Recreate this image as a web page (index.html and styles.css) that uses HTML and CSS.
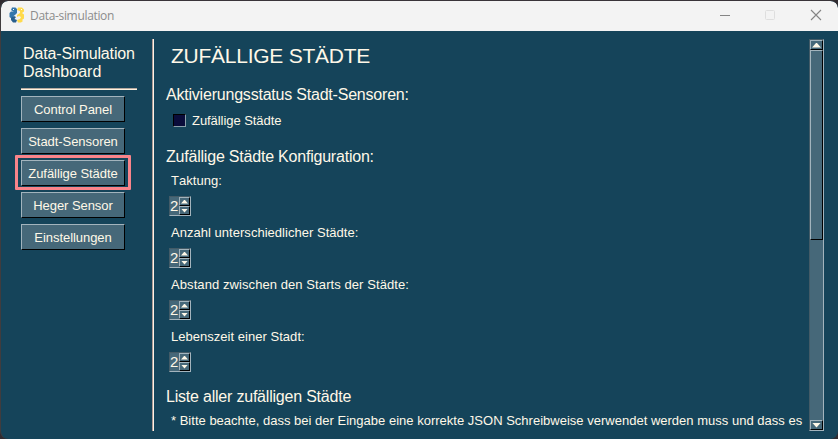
FILE: index.html
```html
<!DOCTYPE html>
<html lang="de">
<head>
<meta charset="utf-8">
<title>Data-simulation</title>
<link rel="stylesheet" href="styles.css">
</head>
<body>
<div class="window">
  <header class="titlebar">
    <svg class="logo" width="16" height="16" viewBox="0 0 16 16">
      <path d="M3 .5h3.500L8 2v4L6 8 4.500 9v2L3 12 .5 10V6L2 4.500h3L3.500 4 2 3z" fill="#3476ac"/>
      <path d="M2 11l3-2 2 1-1.500 2L8 13l-1 2.500H4L2 13z" fill="#285f8e"/>
      <path d="M9 .5h4l2 2v2L13 6l2 1.500v4L13 13l1 1-2 1.500H9L8 13l3-1 1-2-2-1-2 1V8l3-2V4L8 3z" fill="#ffda4b"/>
      <path d="M4 2h1v1H4zM12 2h1v1h-1z" fill="#fff"/>
    </svg>
    <span class="caption">Data-simulation</span>
    <svg class="controls" width="106" height="12" viewBox="0 0 106 12" fill="none">
      <path d="M1 6.500h10" stroke="#858585"/>
      <rect x="46.500" y="1.500" width="9" height="9" rx="1" stroke="#dedede"/>
      <path d="M92 1l10 10M102 1L92 11" stroke="#858585" stroke-width="1.100"/>
    </svg>
  </header>
  <div class="body">
    <nav class="sidebar">
      <div class="brand"><span class="brand-one">Data-Simulation</span><br>Dashboard</div>
      <div class="rule"></div>
      <button class="nav">Control Panel</button>
      <button class="nav">Stadt-Sensoren</button>
      <button class="nav selected">Zufällige Städte</button>
      <button class="nav">Heger Sensor</button>
      <button class="nav">Einstellungen</button>
    </nav>
    <div class="divider"></div>
    <main class="content">
      <h1>ZUFÄLLIGE STÄDTE</h1>
      <h2 class="status">Aktivierungsstatus Stadt-Sensoren:</h2>
      <div class="check"><span class="box"></span><span class="check-label">Zufällige Städte</span></div>
      <h2 class="config">Zufällige Städte Konfiguration:</h2>
      <div class="field"><div class="label">Taktung:</div><div class="spin"><span class="value">2</span><span class="steps"><i class="up"></i><i class="down"></i></span></div></div>
      <div class="field"><div class="label">Anzahl unterschiedlicher Städte:</div><div class="spin"><span class="value">2</span><span class="steps"><i class="up"></i><i class="down"></i></span></div></div>
      <div class="field"><div class="label wide">Abstand zwischen den Starts der Städte:</div><div class="spin"><span class="value">2</span><span class="steps"><i class="up"></i><i class="down"></i></span></div></div>
      <div class="field"><div class="label">Lebenszeit einer Stadt:</div><div class="spin"><span class="value">2</span><span class="steps"><i class="up"></i><i class="down"></i></span></div></div>
      <h2 class="list">Liste aller zufälligen Städte</h2>
      <p class="note">* Bitte beachte, dass bei der Eingabe eine korrekte JSON Schreibweise verwendet werden muss und dass es</p>
    </main>
    <div class="scrollbar">
      <div class="arrow"><i class="up big"></i></div>
      <div class="thumb"></div>
      <div class="arrow last"><i class="down big"></i></div>
    </div>
  </div>
</div>
</body>
</html>
```
FILE: styles.css
```css
* { box-sizing: border-box; }
body { margin: 0; background: #302b30; font: 13px/16px "Liberation Sans", Arial, sans-serif; color: #fff8e8; font-kerning: none; }
.window { width: 838px; height: 439px; border-top: 1px solid #393439; border-left: 1px solid #403c3e; border-radius: 8px; overflow: hidden; background: #15445a; }
.titlebar { height: 30px; background: #f3f3f3; display: flex; align-items: center; padding: 0 13px 0 8px; border-radius: 7px 7px 0 0; }
.logo { flex: none; margin-top: -2px; }
.caption { margin-left: 5px; flex: 1; font: 12px/16px "Open Sans", "Noto Sans", sans-serif; letter-spacing: -.33px; color: #8c8c8c; }
.controls { flex: none; margin-top: -2px; }
.body { display: flex; height: 408px; padding-top: 8px; }
.sidebar { width: 151px; padding: 6px 0 0 20px; }
.brand { font-size: 16px; line-height: 18px; padding-left: 2px; white-space: nowrap; }
.brand-one { letter-spacing: -.13px; }
.rule { width: 116px; height: 2px; margin: 7px 0 6px; border-top: 1px solid #b6aaa0; border-bottom: 1px solid #fff2df; }
.nav { position: relative; display: block; width: 104px; height: 26px; margin: 0 0 6px; padding: 1px 0 0; border: 1px solid; border-color: #a3b4bd #000 #000 #a3b4bd; background: #466879; color: #fff8e8; font: inherit; line-height: 24px; letter-spacing: -.06px; white-space: nowrap; }
.nav.selected::after { content: ""; position: absolute; inset: -6px -7px -5px -7px; border: 3px solid #f9848a; border-radius: 1px; }
.divider { width: 2px; height: 392px; border-left: 1px solid #ac9a94; border-right: 1px solid #fff2e6; }
.content { width: 655px; padding: 4px 0 0 12px; }
h1, h2 { font-weight: 400; margin: 0; white-space: nowrap; }
h1 { font-size: 21px; line-height: 26px; padding-left: 5px; letter-spacing: -.25px; }
h2 { font-size: 16px; line-height: 20px; letter-spacing: -.21px; }
.status { margin-top: 16px; }
.check { display: flex; height: 16px; margin-top: 8px; padding-left: 7px; }
.check-label { letter-spacing: -.06px; }
.box { width: 13px; height: 13px; margin: 1px 6px 0 0; background: #0a0c3a; border: 1px solid; border-color: #000 #8ba0aa #8ba0aa #000; }
.config { margin-top: 18px; margin-bottom: 6px; }
.field { height: 52px; }
.label { height: 23px; padding-left: 5px; letter-spacing: .03px; white-space: nowrap; }
.wide { letter-spacing: .08px; }
.spin { display: flex; width: 22px; height: 20px; margin-left: 3px; background: #466879; border: 1px solid; border-color: #435b67 #a3b4bd #a3b4bd #435b67; }
.value { width: 9px; font-size: 15px; line-height: 18px; }
.steps { display: grid; width: 11px; grid-template-rows: 9px 9px; }
.steps i { border: 1px solid; border-color: #a3b4bd #000 #000 #a3b4bd; }
.up, .down { display: grid; place-items: center; }
.up::before, .down::before { content: ""; width: 7px; height: 4px; background: #fff8e8; clip-path: polygon(50% 0, 100% 100%, 0 100%); }
.down::before { clip-path: polygon(0 0, 100% 0, 50% 100%); }
.big::before { width: 9px; height: 5px; }
.list { margin-top: 6px; }
.note { margin: 6px 0 0; padding-left: 5px; letter-spacing: .01px; white-space: nowrap; }
.scrollbar { display: flex; flex-direction: column; width: 15px; height: 392px; background: #466879; border: 1px solid; border-color: #435b67 #a3b4bd #a3b4bd #435b67; }
.arrow { height: 10px; flex: none; display: grid; place-items: center; border: 1px solid; border-color: #a3b4bd #000 #000 #a3b4bd; }
.thumb { height: 190px; border: 1px solid; border-color: #a3b4bd #000 #000 #a3b4bd; }
.last { margin-top: auto; }
```
